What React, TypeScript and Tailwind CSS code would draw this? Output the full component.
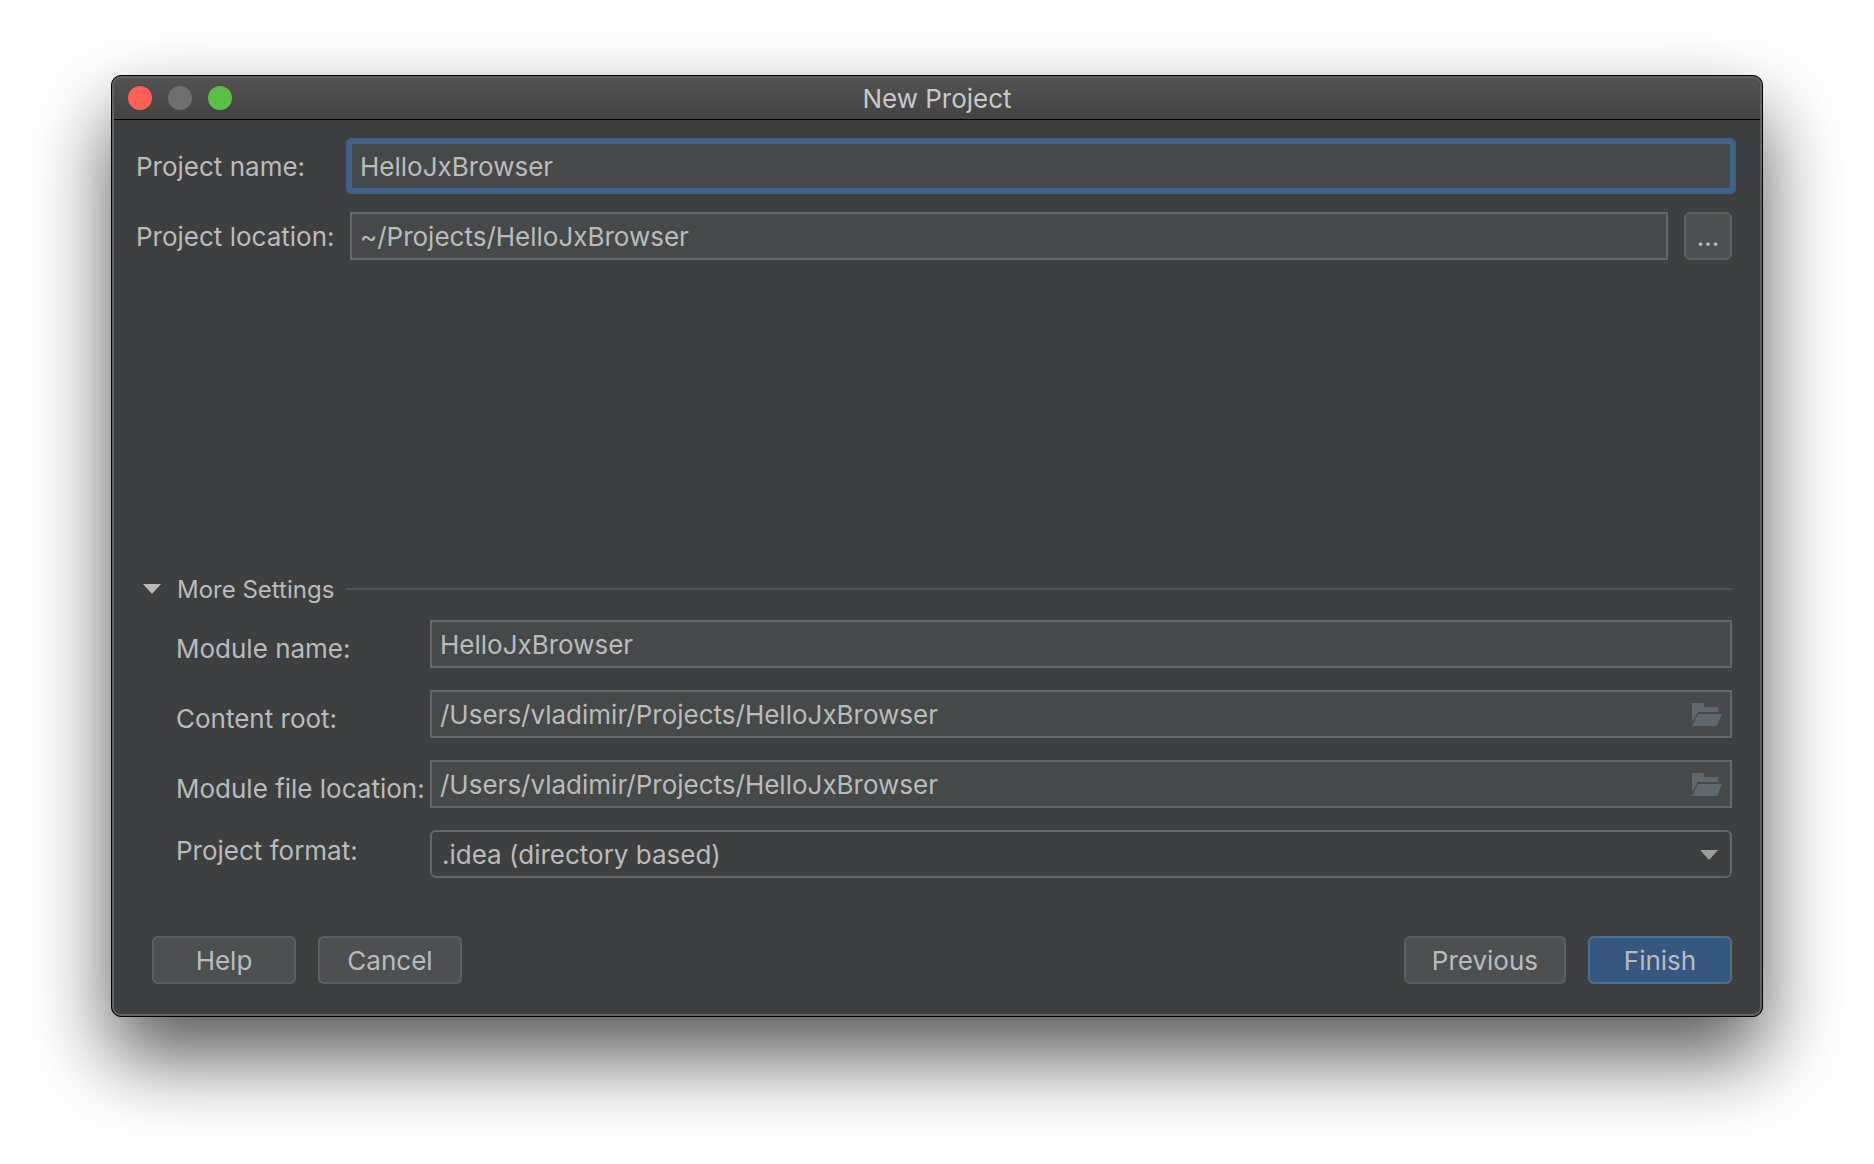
import { useState } from "react";
import clsx from "clsx";

const FolderIcon = () => (
  <svg width="32" height="26" viewBox="0 0 32 26" fill="#5f696d" aria-hidden="true">
    <path d="M2 2h11l2 4h13v5H8L2 21z" />
    <path d="M8 13h24l-5 12H2z" />
  </svg>
);

const TriangleDown = ({ className }: { className?: string }) => (
  <svg width="18" height="10" viewBox="0 0 18 10" fill="currentColor" className={className} aria-hidden="true">
    <path d="M0 0h18L9 10z" />
  </svg>
);

const TextField = ({
  id,
  initial,
  focused = false,
  browseLabel,
}: {
  id: string;
  initial: string;
  focused?: boolean;
  browseLabel?: string;
}) => {
  const [value, setValue] = useState(initial);

  return (
    <div
      className={clsx(
        "flex h-12 min-w-0 flex-1 items-center border-2 bg-[#45494a]",
        focused ? "rounded-xs border-[#3f658a] ring-4 ring-[#3d6389]" : "border-[#646667]",
      )}
    >
      <input
        id={id}
        type="text"
        spellCheck={false}
        value={value}
        onChange={e => setValue(e.target.value)}
        className="h-full min-w-0 flex-1 bg-transparent px-2 outline-none"
      />
      {browseLabel && (
        <button type="button" aria-label={browseLabel} className="mr-2">
          <FolderIcon />
        </button>
      )}
    </div>
  );
};

const DialogButton = ({ label, primary = false }: { label: string; primary?: boolean }) => (
  <button
    type={primary ? "submit" : "button"}
    className={clsx(
      "h-12 min-w-36 rounded-md border-2 px-[26px] pt-0.5",
      primary ? "border-[#4c708c] bg-[#365880]" : "border-[#5e6060] bg-[#4c5052]",
    )}
  >
    {label}
  </button>
);

const TitleBar = () => (
  <header className="grid h-[42px] grid-cols-[1fr_auto_1fr] items-center border-b border-black bg-linear-to-b from-[#525252] to-[#434343]">
    <div className="flex gap-4 pb-px pl-3.5">
      <button type="button" aria-label="Close" className="size-6 rounded-full bg-[#ff5f57]" />
      <button type="button" aria-label="Minimize" disabled className="size-6 rounded-full bg-[#6f6f6f]" />
      <button type="button" aria-label="Zoom" className="size-6 rounded-full bg-[#5ac043]" />
    </div>
    <h1 className="text-[#c8c8c8]">New Project</h1>
  </header>
);

export default function App() {
  const [expanded, setExpanded] = useState(true);

  return (
    <div className="flex min-h-screen flex-col bg-white px-[111px] pt-[75px] pb-[147px] font-['Inter','Liberation_Sans',sans-serif] text-[26px] leading-8 text-[#bbbbbb]">
      <main className="flex flex-1 flex-col rounded-[10px] border border-black bg-black shadow-[0_40px_80px_rgba(0,0,0,0.66)]">
        <div className="flex flex-1 flex-col overflow-hidden rounded-[9px] border-2 border-[#626364] bg-[#3d3f41]">
          <TitleBar />
          <form className="flex flex-1 flex-col pt-[22px] pr-7 pb-[30px] pl-[22px]" onSubmit={e => e.preventDefault()}>
            <div className="grid grid-cols-[214px_1fr] items-center gap-y-[22px]">
              <label htmlFor="projectName" className="pt-0.5">
                Project name:
              </label>
              <TextField id="projectName" initial="HelloJxBrowser" focused />
              <label htmlFor="projectLocation" className="pt-0.5">
                Project location:
              </label>
              <div className="flex gap-4">
                <TextField id="projectLocation" initial="~/Projects/HelloJxBrowser" />
                <button
                  type="button"
                  aria-label="Browse project location"
                  className="size-12 rounded-md border-2 border-[#5e6060] bg-[#4c5052] pt-0.5"
                >
                  ...
                </button>
              </div>
            </div>

            <div className="flex-1" />

            <div className="flex items-center gap-3">
              <button
                type="button"
                aria-expanded={expanded}
                onClick={() => setExpanded(!expanded)}
                className="flex items-center gap-4 pl-[7px] text-[24px]"
              >
                <TriangleDown />
                <span className="pt-0.5">More Settings</span>
              </button>
              <div className="h-0.5 flex-1 bg-[#515355]" />
            </div>

            {expanded && (
              <div className="mt-3.5 grid grid-cols-[254px_1fr] items-center gap-y-[22px] pl-10">
                <label htmlFor="moduleName" className="pt-2.5">
                  Module name:
                </label>
                <TextField id="moduleName" initial="HelloJxBrowser" />
                <label htmlFor="contentRoot" className="pt-2.5">
                  Content root:
                </label>
                <TextField
                  id="contentRoot"
                  initial="/Users/vladimir/Projects/HelloJxBrowser"
                  browseLabel="Browse content root"
                />
                <label htmlFor="moduleFile" className="pt-2.5 whitespace-nowrap">
                  Module file location:
                </label>
                <TextField
                  id="moduleFile"
                  initial="/Users/vladimir/Projects/HelloJxBrowser"
                  browseLabel="Browse module file location"
                />
                <label htmlFor="projectFormat" className="pb-1.5">
                  Project format:
                </label>
                <div className="relative">
                  <select
                    id="projectFormat"
                    className="h-12 w-full appearance-none rounded-md border-2 border-[#646667] bg-[#3d3f41] px-2.5 pt-0.5 outline-none"
                  >
                    <option>.idea (directory based)</option>
                    <option>.ipr (file based)</option>
                  </select>
                  <TriangleDown className="pointer-events-none absolute top-5 right-3.5 text-[#9c9d9e]" />
                </div>
              </div>
            )}

            <footer className="mt-[58px] flex justify-between pl-4">
              <div className="flex gap-[22px]">
                <DialogButton label="Help" />
                <DialogButton label="Cancel" />
              </div>
              <div className="flex gap-[22px]">
                <DialogButton label="Previous" />
                <DialogButton label="Finish" primary />
              </div>
            </footer>
          </form>
        </div>
      </main>
    </div>
  );
}
